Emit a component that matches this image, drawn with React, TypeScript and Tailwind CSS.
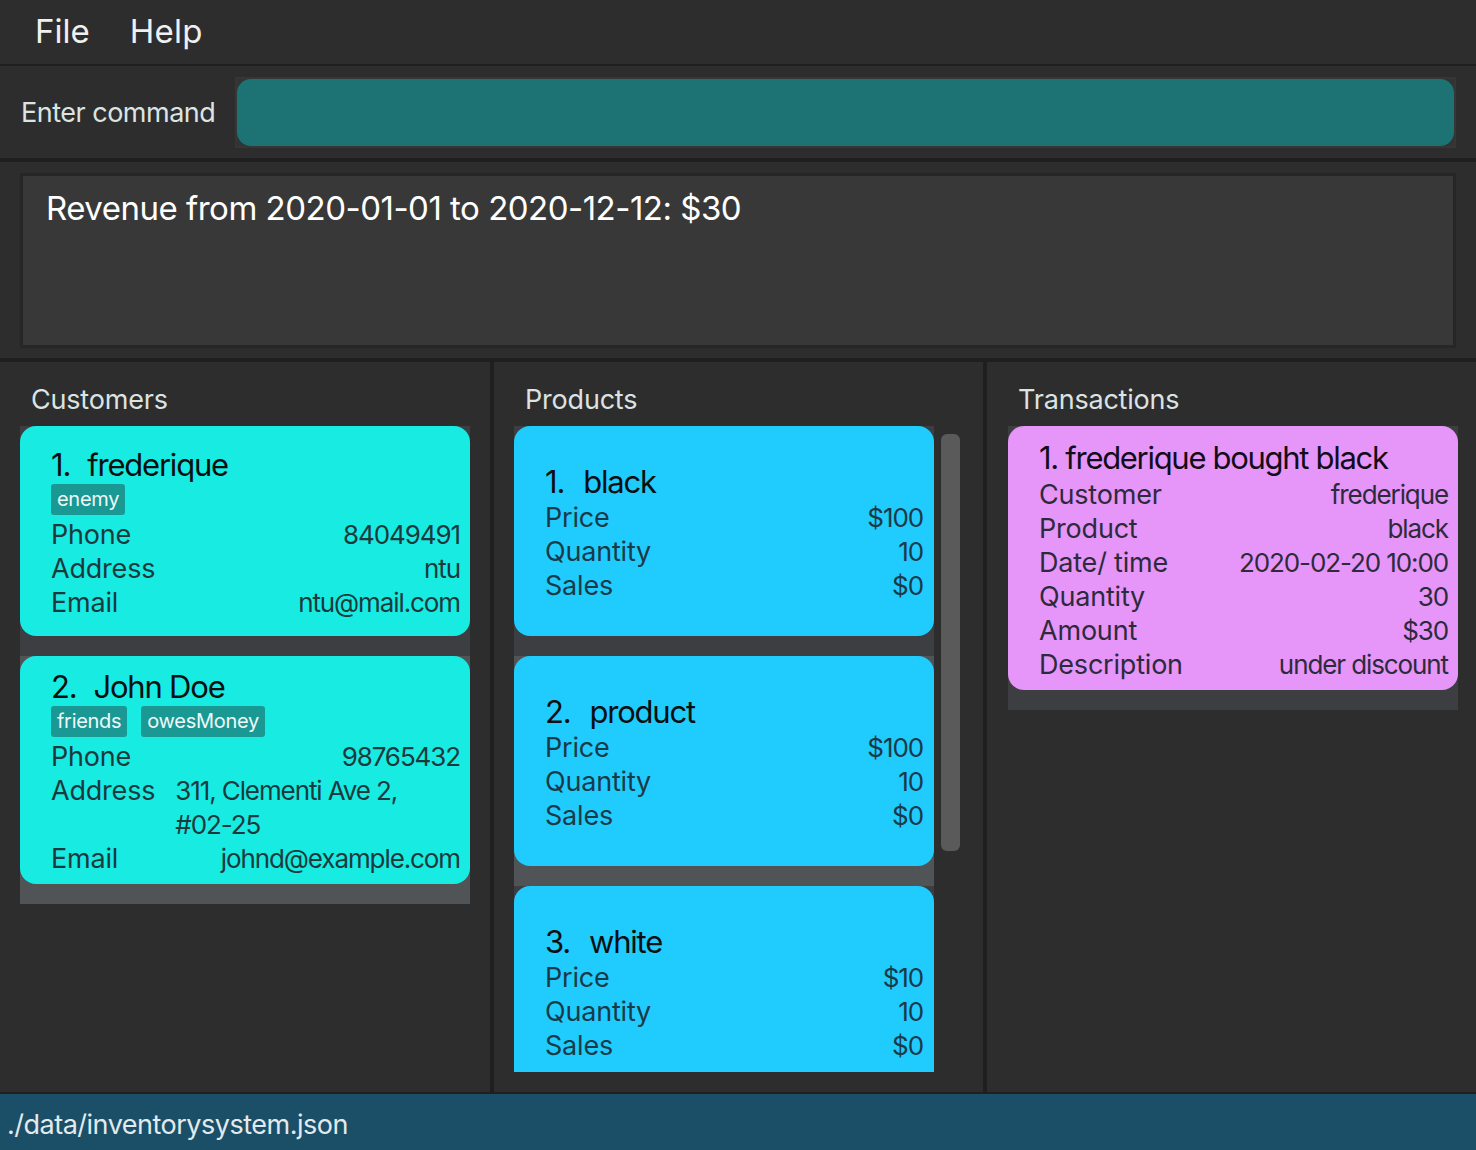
import React from "react";

const font = { fontFamily: "Inter, 'Open Sans', 'Liberation Sans', sans-serif" };

function Row({ label, value, left }: { label: string; value: React.ReactNode; left?: boolean }) {
  return (
    <div className="flex items-start justify-between leading-[34px]">
      <span className="shrink-0 text-[27px] tracking-[-0.2px]">{label}</span>
      <span
        className={
          left
            ? "ml-[20px] flex-1 text-left text-[26px] tracking-[-1.1px]"
            : "text-right text-[26px] tracking-[-1.1px]"
        }
      >
        {value}
      </span>
    </div>
  );
}

function Tag({ t }: { t: string }) {
  return (
    <span className="inline-block h-[31px] rounded-[3px] bg-[#1a9893] px-[6px] text-[20px] leading-[31px] tracking-[-0.3px] text-[#eefafa]">
      {t}
    </span>
  );
}

function CustomerCard({
  idx,
  name,
  tags,
  phone,
  address,
  email,
  alt,
  wrapAddr,
}: {
  idx: number;
  name: string;
  tags: string[];
  phone: string;
  address: React.ReactNode;
  email: string;
  alt?: boolean;
  wrapAddr?: boolean;
}) {
  return (
    <div className={alt ? "bg-[#505457] pb-[20px]" : "bg-[#3c3e41] pb-[20px]"}>
      <div className="flex min-h-[210px] flex-col justify-center rounded-[16px] bg-[#18ebe1] pb-[8px] pl-[31px] pr-[10px] pt-[12px]">
        <div className="flex gap-[17px] text-[31px] leading-[38px] tracking-[-1.2px] text-[#0a0f10]">
          <span>{idx}.</span>
          <span>{name}</span>
        </div>
        <div className="mb-[3px] flex h-[31px] gap-[14px]">
          {tags.map((t) => (
            <Tag key={t} t={t} />
          ))}
        </div>
        <div className="text-[#1c3a3d]">
          <Row label="Phone" value={phone} />
          <Row label="Address" value={address} left={wrapAddr} />
          <Row label="Email" value={email} />
        </div>
      </div>
    </div>
  );
}

function ProductCard({
  idx,
  name,
  price,
  qty,
  sales,
  alt,
}: {
  idx: number;
  name: string;
  price: string;
  qty: string;
  sales: string;
  alt?: boolean;
}) {
  return (
    <div className={alt ? "bg-[#505457] pb-[20px]" : "bg-[#3c3e41] pb-[20px]"}>
      <div className="flex min-h-[210px] flex-col justify-center rounded-[16px] bg-[#20cbfe] pb-[8px] pl-[31px] pr-[11px] pt-[12px]">
        <div className="flex gap-[19px] text-[31px] leading-[38px] tracking-[-1.2px] text-[#0a0f12]">
          <span>{idx}.</span>
          <span>{name}</span>
        </div>
        <div className="text-[#1a3a48]">
          <Row label="Price" value={price} />
          <Row label="Quantity" value={qty} />
          <Row label="Sales" value={sales} />
        </div>
      </div>
    </div>
  );
}

function PanelTitle({ t }: { t: string }) {
  return (
    <div className="flex h-[64px] items-center pt-[12px] text-[27px] tracking-[-0.2px] text-[#dbe3e3]">{t}</div>
  );
}

export default function App() {
  return (
    <div className="flex h-[1150px] w-[1476px] flex-col overflow-hidden bg-[#2d2d2d]" style={font}>
      {/* menu */}
      <div className="flex h-[64px] shrink-0 items-center pl-[35px] text-[33px] text-[#f0f0f0]">
        <span>File</span>
        <span className="ml-[40px] tracking-[0.3px]">Help</span>
      </div>
      <div className="h-[2px] shrink-0 bg-[#1f1f1f]" />
      {/* command */}
      <div className="flex h-[92px] shrink-0 items-center">
        <span className="w-[235px] shrink-0 pl-[21px] pt-[3px] text-[27px] tracking-[-0.5px] text-[#dbe4e4]">
          Enter command
        </span>
        <div className="h-[71px] w-[1221px] border-2 border-[#363636] bg-[#333333]">
          <div className="h-full w-full rounded-[14px] bg-[#1d7373]" />
        </div>
      </div>
      <div className="h-[4px] shrink-0 bg-[#1f1f1f]" />
      {/* result */}
      <div className="h-[196px] shrink-0 px-[20px] pt-[11px]">
        <div className="h-[175px] w-[1436px] border-[3px] border-[#262626] bg-[#383838] pl-[23px] pt-[12px]">
          <div className="text-[33px] leading-[40px] tracking-[-0.5px] text-white">
            Revenue from 2020-01-01 to 2020-12-12: $30
          </div>
        </div>
      </div>
      <div className="h-[4px] shrink-0 bg-[#1f1f1f]" />
      {/* panels */}
      <div className="flex h-[730px] shrink-0">
        {/* customers */}
        <div className="flex w-[490px] shrink-0 flex-col pl-[20px] pr-[20px]">
          <div className="pl-[11px]">
            <PanelTitle t="Customers" />
          </div>
          <div className="w-[450px]">
            <CustomerCard
              idx={1}
              name="frederique"
              tags={["enemy"]}
              phone="84049491"
              address="ntu"
              email="ntu@mail.com"
            />
            <CustomerCard
              idx={2}
              name="John Doe"
              tags={["friends", "owesMoney"]}
              phone="98765432"
              address={
                <>
                  311, Clementi Ave 2,
                  <br />
                  #02-25
                </>
              }
              email="johnd@example.com"
              alt
              wrapAddr
            />
          </div>
        </div>
        <div className="w-[4px] shrink-0 bg-[#1f1f1f]" />
        {/* products */}
        <div className="flex w-[489px] shrink-0 flex-col pb-[20px] pl-[20px]">
          <div className="pl-[11px]">
            <PanelTitle t="Products" />
          </div>
          <div className="flex min-h-0 flex-1 gap-[7px]">
            <div className="w-[420px] overflow-hidden">
              <ProductCard idx={1} name="black" price="$100" qty="10" sales="$0" />
              <ProductCard idx={2} name="product" price="$100" qty="10" sales="$0" alt />
              <ProductCard idx={3} name="white" price="$10" qty="10" sales="$0" />
            </div>
            <div className="pt-[8px]">
              <div className="h-[417px] w-[19px] rounded-[6px] bg-[#5a5a5a]" />
            </div>
          </div>
        </div>
        <div className="w-[4px] shrink-0 bg-[#1f1f1f]" />
        {/* transactions */}
        <div className="flex flex-1 flex-col pl-[21px]">
          <div className="pl-[10px]">
            <PanelTitle t="Transactions" />
          </div>
          <div className="w-[450px]">
            <div className="bg-[#3c3e41] pb-[20px]">
              <div className="flex min-h-[264px] flex-col justify-center rounded-[16px] bg-[#e696f8] pb-[8px] pl-[31px] pr-[10px] pt-[12px]">
                <div className="text-[31px] leading-[38px] tracking-[-1.3px] text-[#120d18]">
                  1. frederique bought black
                </div>
                <div className="mt-[1px] text-[#2d2a3c]">
                  <Row label="Customer" value="frederique" />
                  <Row label="Product" value="black" />
                  <Row label="Date/ time" value="2020-02-20 10:00" />
                  <Row label="Quantity" value="30" />
                  <Row label="Amount" value="$30" />
                  <Row label="Description" value="under discount" />
                </div>
              </div>
            </div>
          </div>
        </div>
      </div>
      <div className="h-[2px] shrink-0 bg-[#1f1f1f]" />
      {/* status */}
      <div className="flex flex-1 items-center bg-[#1a4f67] pl-[7px] pt-[6px] text-[27px] tracking-[-0.5px] text-[#e2eaee]">
        ./data/inventorysystem.json
      </div>
    </div>
  );
}
